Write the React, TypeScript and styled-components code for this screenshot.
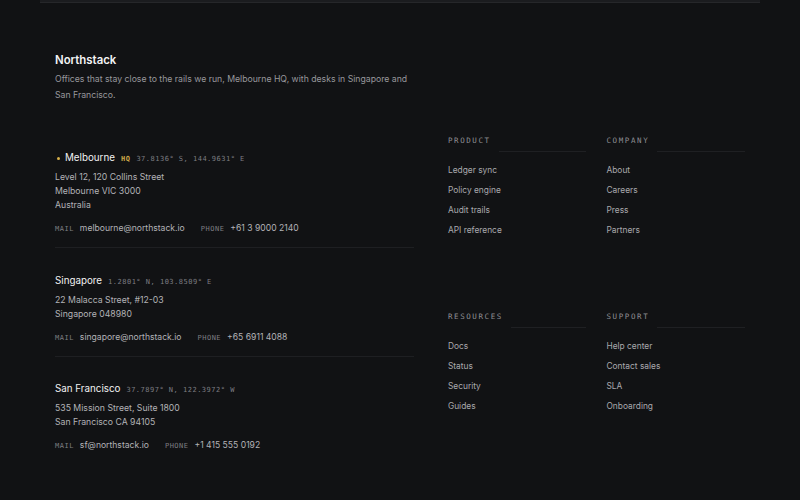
import styled, { createGlobalStyle } from "styled-components";

const GlobalStyle = createGlobalStyle`
  body {
    margin: 0;
    background: #111214;
    font-family: "Inter", "Noto Sans", sans-serif;
    -webkit-font-smoothing: antialiased;
  }
`;

const Page = styled.div`
  min-height: 500px;
  background: #111214;
`;

const TopEdge = styled.div`
  height: 2px;
  margin: 0 40px;
  background: #1b1c1f;
  border-bottom: 1px solid #26272a;
`;

const Footer = styled.footer`
  padding: 49px 55px 40px;
`;

const Intro = styled.div`
  max-width: 362px;
`;

const Brand = styled.h2`
  margin: 0;
  color: #f3f3f4;
  font-size: 11.4px;
  font-weight: 600;
  line-height: 16px;
`;

const Blurb = styled.p`
  margin: 3px 0 0;
  color: #98989d;
  font-size: 8.7px;
  line-height: 16px;
`;

const Grid = styled.div`
  display: grid;
  grid-template-columns: 1.2fr 1fr;
  column-gap: 32px;
  margin-top: 33px;
`;

const Locations = styled.div`
  display: flex;
  flex-direction: column;
`;

const Location = styled.section`
  padding: 25px 0 12px;
  border-bottom: 1px solid #1e1f22;
  &:first-child {
    padding-top: 14px;
  }
  &:last-child {
    border-bottom: none;
    padding-top: 24px;
  }
`;

const CityRow = styled.div`
  display: flex;
  align-items: baseline;
  gap: 6px;
  height: 16px;
  line-height: 16px;
`;

const Dot = styled.span`
  width: 3px;
  height: 3px;
  border-radius: 50%;
  background: #d8b04a;
  align-self: center;
  margin-left: 2px;
  margin-right: -1px;
`;

const City = styled.h3`
  margin: 0;
  color: #f1f1f2;
  font-size: 9.8px;
  font-weight: 400;
`;

const Mono = styled.span<{ $tone?: string; $bold?: boolean }>`
  font-family: "DejaVu Sans Mono", "Liberation Mono", monospace;
  font-size: 7px;
  letter-spacing: 0.5px;
  color: ${(p) => p.$tone || "#7d7d82"};
  font-weight: ${(p) => (p.$bold ? 700 : 400)};
`;

const Address = styled.div`
  margin-top: 4px;
  color: #b3b3b7;
  font-size: 8.7px;
  line-height: 14px;
`;

const Contact = styled.div`
  display: flex;
  align-items: baseline;
  gap: 16px;
  margin-top: 9px;
  height: 14px;
  line-height: 14px;
`;

const ContactItem = styled.span`
  display: inline-flex;
  align-items: baseline;
  gap: 6px;
  color: #b3b3b7;
  font-size: 8.6px;
`;

const LinkGrid = styled.div`
  display: grid;
  grid-template-columns: 1fr 1fr;
  column-gap: 20px;
  row-gap: 74px;
  align-content: start;
  padding-left: 2px;
  margin-top: -1px;
`;

const Group = styled.nav`
  display: flex;
  flex-direction: column;
`;

const GroupHead = styled.div`
  display: flex;
  align-items: flex-start;
  gap: 8px;
  height: 18px;
`;

const HeadText = styled.span`
  font-family: "DejaVu Sans Mono", "Liberation Mono", monospace;
  font-size: 7.5px;
  line-height: 12px;
  letter-spacing: 1.6px;
  color: #8e8e93;
`;

const Rule = styled.span`
  flex: 1;
  height: 1px;
  margin-top: 16px;
  background: #1f2023;
`;

const Links = styled.ul`
  list-style: none;
  margin: 10px 0 0;
  padding: 0;
  display: flex;
  flex-direction: column;
  gap: 6px;
`;

const LinkItem = styled.li`
  color: #a9a9ad;
  font-size: 8.4px;
  line-height: 14px;
`;

type Office = {
  city: string;
  hq?: boolean;
  coords: string;
  address: string[];
  mail: string;
  phone: string;
};

const offices: Office[] = [
  {
    city: "Melbourne",
    hq: true,
    coords: "37.8136° S, 144.9631° E",
    address: ["Level 12, 120 Collins Street", "Melbourne VIC 3000", "Australia"],
    mail: "melbourne@northstack.io",
    phone: "+61 3 9000 2140",
  },
  {
    city: "Singapore",
    coords: "1.2801° N, 103.8509° E",
    address: ["22 Malacca Street, #12-03", "Singapore 048980"],
    mail: "singapore@northstack.io",
    phone: "+65 6911 4088",
  },
  {
    city: "San Francisco",
    coords: "37.7897° N, 122.3972° W",
    address: ["535 Mission Street, Suite 1800", "San Francisco CA 94105"],
    mail: "sf@northstack.io",
    phone: "+1 415 555 0192",
  },
];

const groups = [
  { title: "PRODUCT", links: ["Ledger sync", "Policy engine", "Audit trails", "API reference"] },
  { title: "COMPANY", links: ["About", "Careers", "Press", "Partners"] },
  { title: "RESOURCES", links: ["Docs", "Status", "Security", "Guides"] },
  { title: "SUPPORT", links: ["Help center", "Contact sales", "SLA", "Onboarding"] },
];

export default function App() {
  return (
    <Page>
      <GlobalStyle />
      <TopEdge />
      <Footer>
        <Intro>
          <Brand>Northstack</Brand>
          <Blurb>
            Offices that stay close to the rails we run, Melbourne HQ, with desks in Singapore and San
            Francisco.
          </Blurb>
        </Intro>
        <Grid>
          <Locations>
            {offices.map((o) => (
              <Location key={o.city}>
                <CityRow>
                  {o.hq && <Dot />}
                  <City>{o.city}</City>
                  {o.hq && (
                    <Mono $tone="#c9a548" $bold>
                      HQ
                    </Mono>
                  )}
                  <Mono>{o.coords}</Mono>
                </CityRow>
                <Address>
                  {o.address.map((line) => (
                    <div key={line}>{line}</div>
                  ))}
                </Address>
                <Contact>
                  <ContactItem>
                    <Mono>MAIL</Mono>
                    {o.mail}
                  </ContactItem>
                  <ContactItem>
                    <Mono>PHONE</Mono>
                    {o.phone}
                  </ContactItem>
                </Contact>
              </Location>
            ))}
          </Locations>
          <LinkGrid>
            {groups.map((g) => (
              <Group key={g.title}>
                <GroupHead>
                  <HeadText>{g.title}</HeadText>
                  <Rule />
                </GroupHead>
                <Links>
                  {g.links.map((l) => (
                    <LinkItem key={l}>{l}</LinkItem>
                  ))}
                </Links>
              </Group>
            ))}
          </LinkGrid>
        </Grid>
      </Footer>
    </Page>
  );
}
